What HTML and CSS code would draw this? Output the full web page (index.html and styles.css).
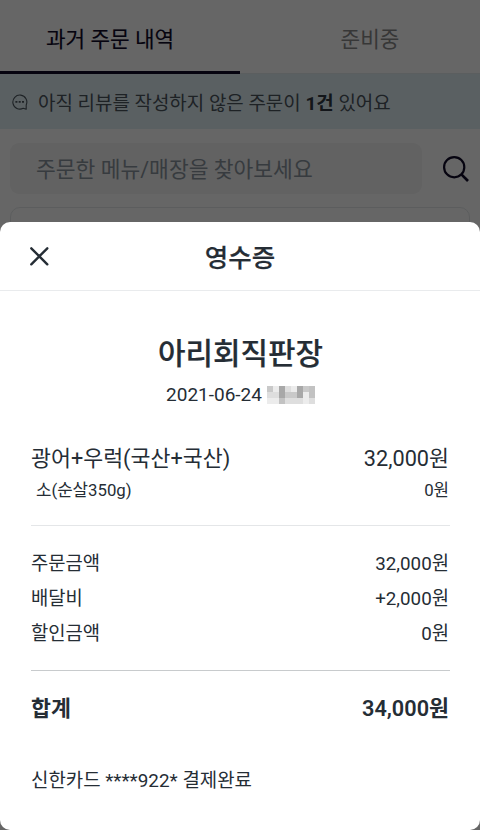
FILE: index.html
```html
<!DOCTYPE html>
<html lang="ko">
<head>
<meta charset="utf-8">
<title>영수증</title>
<link rel="stylesheet" href="styles.css">
</head>
<body>
<main class="page">
  <nav class="tabs">
    <div class="tab tab-active">과거 주문 내역</div>
    <div class="tab">준비중</div>
  </nav>
  <div class="banner">
    <svg class="bubble" viewBox="0 0 16 16" width="16" height="16" fill="none" stroke="currentColor">
      <path d="M14.2 15.2L11.2 14.2A7 7 0 1 1 14.2 11Z" stroke-width="1.1" stroke-linejoin="round"/>
      <path d="M3.4 7.9h2M6.7 7.9h2M10 7.9h2" stroke-width="1.8"/>
    </svg>
    <span>아직 리뷰를 작성하지 않은 주문이 <b>1건</b> 있어요</span>
  </div>
  <div class="search">
    <div class="search-field">주문한 메뉴/매장을 찾아보세요</div>
    <svg class="search-icon" viewBox="0 0 28 28" width="28" height="28" fill="none" stroke="currentColor">
      <circle cx="12.2" cy="12.2" r="10.1" stroke-width="2.2"/>
      <path d="M19.4 19.4L26 26" stroke-width="2.7"/>
    </svg>
  </div>
  <div class="order-card"></div>
</main>
<div class="overlay"></div>
<section class="sheet">
  <header class="sheet-header">
    <svg class="close" viewBox="0 0 20 20" width="20" height="20" fill="none" stroke="currentColor" stroke-width="2.4" stroke-linecap="round">
      <path d="M2.3 2.3L18.3 18.3M18.3 2.3L2.3 18.3"/>
    </svg>
    <h1 class="sheet-title">영수증</h1>
  </header>
  <div class="receipt">
    <h2 class="store">아리회직판장</h2>
    <div class="date"><span>2021-06-24</span>
      <svg class="mosaic" viewBox="0 0 48 18" width="48" height="18" shape-rendering="crispEdges">
        <path fill="#dedede" d="M0 0h48v18H0z"/>
        <path fill="#c9c9c9" d="M0 0h6v6H0zM18 6h6v6h-6zM24 6h6v6h-6zM36 0h6v6h-6z"/>
        <path fill="#ececec" d="M6 0h6v6H6zM24 0h6v6h-6zM0 12h12v6H0zM36 6h6v12h-6z"/>
        <path fill="#a8a8a8" d="M12 0h6v12h-6zM30 0h6v12h-6z"/>
        <path fill="#c2c2c2" d="M12 12h6v6h-6zM42 0h6v12h-6z"/>
      </svg>
    </div>
    <div class="row item"><span>광어+우럭(국산+국산)</span><span>32,000원</span></div>
    <div class="row option"><span>소(순살350g)</span><span>0원</span></div>
    <div class="amounts">
      <div class="row"><span>주문금액</span><span>32,000원</span></div>
      <div class="row"><span>배달비</span><span>+2,000원</span></div>
      <div class="row"><span>할인금액</span><span>0원</span></div>
    </div>
    <div class="row total"><span>합계</span><span>34,000원</span></div>
    <div class="payment">신한카드 ****922* 결제완료</div>
  </div>
</section>
</body>
</html>
```
FILE: styles.css
```css
* { box-sizing: border-box; }
body {
  margin: 0;
  height: 830px;
  position: relative;
  overflow: hidden;
  font-family: Roboto, "Noto Sans CJK KR", sans-serif;
  color: #252d35;
  background: #fff;
}
svg { display: block; flex: none; }
.tabs { display: flex; height: 74px; border-bottom: 1px solid #e4eaed; }
.tab {
  flex: 1;
  height: 74px;
  padding-top: 6px;
  text-align: center;
  font-size: 21.3px;
  line-height: 68px;
  color: #8a8a8a;
}
.tab:last-child { padding-left: 20px; }
.tab-active {
  padding-right: 20px;
  color: #100a28;
  -webkit-text-stroke: 0.15px #100a28;
  border-bottom: 3px solid #100a28;
}
.banner {
  display: flex;
  align-items: center;
  height: 55px;
  padding: 5px 0 0 12px;
  gap: 10px;
  background: #e0f1f6;
  color: #4c555d;
  font-size: 18.95px;
  line-height: 28px;
  white-space: nowrap;
}
.banner b { color: #303841; }
.bubble { color: #4c555d; margin-top: -5px; }
.search { display: flex; align-items: center; padding: 14px 10px 0; gap: 20px; }
.search-field {
  width: 413px;
  height: 51px;
  padding-left: 26px;
  border-radius: 9px;
  background: #f5f5f5;
  color: #8a949d;
  font-size: 21.5px;
  line-height: 53px;
}
.search-icon { color: #100a28; }
.order-card { height: 60px; margin: 13px 10px 0; border: 1px solid #e6e9eb; border-radius: 10px; }
.overlay { position: absolute; inset: 0; background: rgba(0, 0, 0, 0.6); }
.sheet {
  position: absolute;
  inset: 222px 0 0;
  background: #fff;
  border-radius: 10px;
}
.sheet-header {
  display: grid;
  grid-template-columns: 1fr auto 1fr;
  align-items: center;
  height: 69px;
  padding: 0 29px;
  border-bottom: 1px solid #e9ebed;
}
.sheet-title { margin: 4px 0 0; font-size: 25.5px; line-height: 38px; font-weight: 500; -webkit-text-stroke: 0.2px; }
.receipt { padding: 41px 30px 0 31px; }
.store { margin: 0; text-align: center; font-size: 29.9px; line-height: 44px; font-weight: 500; -webkit-text-stroke: 0.2px; }
.date {
  display: flex;
  justify-content: center;
  align-items: center;
  gap: 5px;
  margin-top: 5px;
  font-size: 19px;
  line-height: 28px;
}
.row { display: flex; justify-content: space-between; }
.row span:last-child { margin-right: 1px; }
.item { margin-top: 33px; font-size: 21.7px; line-height: 34px; }
.option { margin-top: 1px; padding-left: 5px; font-size: 16.8px; line-height: 26px; }
.amounts {
  margin-top: 22px;
  padding: 21px 0 18px;
  border-top: 1px solid #e4e6e8;
  border-bottom: 1px solid #c8cbcd;
  font-size: 18.8px;
  line-height: 35px;
}
.total { margin-top: 19px; font-size: 21.7px; line-height: 38px; font-weight: 600; }
.payment { margin-top: 38px; font-size: 18.9px; line-height: 30px; }
```
